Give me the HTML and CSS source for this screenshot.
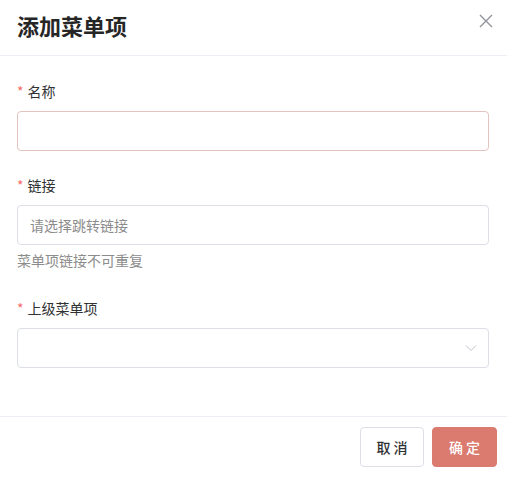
FILE: index.html
```html
<!DOCTYPE html>
<html lang="zh">
<head>
<meta charset="utf-8">
<link rel="stylesheet" href="styles.css">
</head>
<body>
<div class="dialog">
  <div class="header">
    <span class="title">添加菜单项</span>
    <svg class="close" width="14" height="14" viewBox="0 0 14 14"><path d="M1 1L13 13M13 1L1 13" stroke="#909399" stroke-width="1.4" fill="none"/></svg>
  </div>
  <div class="body">
    <div class="item item-first">
      <div class="label"><span class="star">*</span>名称</div>
      <div class="input input-err"></div>
    </div>
    <div class="item item-second">
      <div class="label"><span class="star">*</span>链接</div>
      <div class="input"><span class="ph">请选择跳转链接</span></div>
      <div class="hint">菜单项链接不可重复</div>
    </div>
    <div class="item">
      <div class="label"><span class="star">*</span>上级菜单项</div>
      <div class="input select">
        <svg width="12" height="8" viewBox="0 0 12 8"><path d="M1 1.5L6 6.5L11 1.5" stroke="#c0c4cc" stroke-width="1" fill="none"/></svg>
      </div>
    </div>
  </div>
  <div class="footer">
    <button class="btn">取 消</button>
    <button class="btn primary">确 定</button>
  </div>
</div>
</body>
</html>
```
FILE: styles.css
```css
html, body {
  margin: 0;
  padding: 0;
  background: #fff;
}
body {
  font-family: "Noto Sans CJK SC", "Noto Sans", sans-serif;
  color: #303133;
}
.dialog {
  width: 507px;
  height: 477px;
  display: flex;
  flex-direction: column;
}
.header {
  height: 56px;
  box-sizing: border-box;
  border-bottom: 1px solid #ebeef5;
  display: flex;
  align-items: flex-start;
  justify-content: space-between;
  padding: 0 14px 0 17px;
}
.title {
  font-size: 22px;
  font-weight: 700;
  line-height: 50px;
  color: #262626;
}
.close {
  margin-top: 14px;
}
.body {
  padding: 15px 18px 0 17px;
  flex: 1;
}
.item {
  display: flex;
  flex-direction: column;
}
.item-first { margin-bottom: 14px; }
.item-second { margin-bottom: 18px; }
.label {
  height: 40px;
  line-height: 40px;
  font-size: 14px;
  color: #303133;
  position: relative;
  top: 0;
}
.star {
  color: #f56c6c;
  margin-right: 4px;
}
.input {
  height: 40px;
  box-sizing: border-box;
  border: 1px solid #dcdfe6;
  border-radius: 4px;
  display: flex;
  align-items: center;
  padding: 0 12px;
}
.input-err {
  border-color: #e4c4be;
}
.ph {
  font-size: 14px;
  color: #8c8c8c;
}
.hint {
  font-size: 14px;
  color: #8c8c8c;
  line-height: 20px;
  margin-top: 5px;
}
.select {
  justify-content: flex-end;
  padding-right: 11px;
}
.footer {
  height: 61px;
  box-sizing: border-box;
  border-top: 1px solid #ebeef5;
  display: flex;
  justify-content: flex-end;
  align-items: flex-start;
  gap: 8px;
  padding: 10px 10px 0 0;
}
.btn {
  height: 40px;
  width: 64px;
  border: 1px solid #dcdfe6;
  background: #fff;
  border-radius: 4px;
  font-family: "Noto Sans CJK SC", sans-serif;
  font-size: 14px;
  font-weight: 500;
  color: #303133;
  padding: 0;
}
.btn.primary {
  width: 65px;
  background: #db7b70;
  border-color: #db7b70;
  color: #fff;
}
```
